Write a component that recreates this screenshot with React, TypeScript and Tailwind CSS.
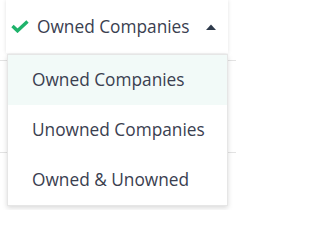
import { useState } from 'react';

const options = ['Owned Companies', 'Unowned Companies', 'Owned & Unowned'];

const App = () => {
  const [selected, setSelected] = useState(options[0]);

  return (
    <div className="relative h-[210px] w-[236px] overflow-hidden bg-white font-['Open_Sans',sans-serif] text-[17.3px] text-[#3a4050]">
      {/* trigger */}
      <button
        type="button"
        className="mx-[6px] flex h-[53px] w-[222px] items-center bg-white pl-[5px] pr-[12px] shadow-[0_0_4px_rgba(0,0,0,0.12)]"
      >
        <svg width="18" height="13" viewBox="0 0 18 13" className="mr-[8px] shrink-0">
          <path d="M1.5 6 L6.5 10.8 L16.5 1.5" fill="none" stroke="#1fb36b" strokeWidth="3.4" />
        </svg>
        <span className="flex-1 text-left">{selected}</span>
        <svg width="10" height="6" viewBox="0 0 10 6" className="shrink-0">
          <path d="M0 6 L5 0.5 L10 6 Z" fill="#2e3a4b" />
        </svg>
      </button>

      {/* table rows behind the menu */}
      <div className="mt-[7px] h-[93px] border-y border-[#e3e3e3]" />

      {/* menu */}
      <ul className="absolute left-[7px] top-[54px] w-[221px] border border-[#e6e6e6] bg-white shadow-[0_2px_5px_rgba(0,0,0,0.15)]">
        {options.map((option) => (
          <li
            key={option}
            onClick={() => setSelected(option)}
            className={`flex h-[50px] cursor-pointer items-center pl-[24px] ${
              option === selected ? 'bg-[#f2faf8]' : ''
            }`}
          >
            {option}
          </li>
        ))}
      </ul>
    </div>
  );
};

export default App;
